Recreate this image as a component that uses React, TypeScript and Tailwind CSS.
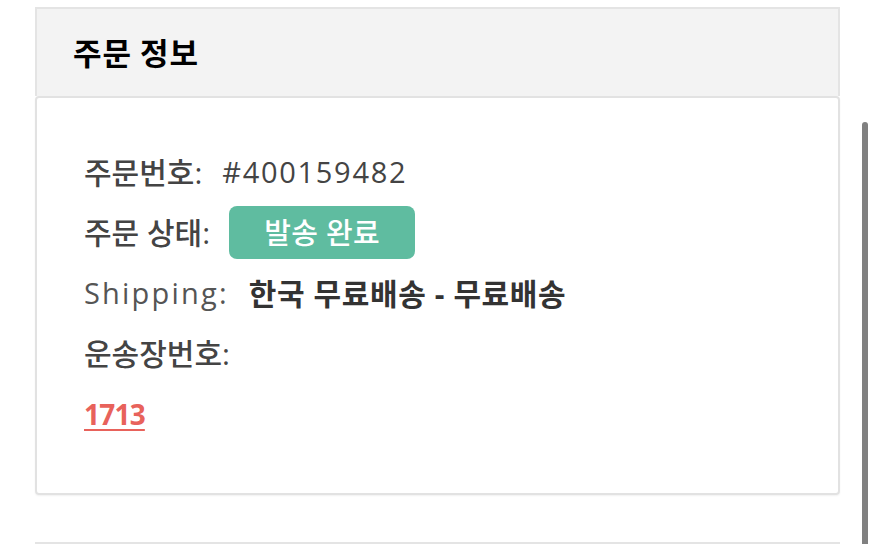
import React from "react";

const latin = { fontFamily: '"Open Sans", "Noto Sans CJK KR", sans-serif' };

export default function App() {
  return (
    <div className="relative w-[875px] h-[544px] overflow-hidden bg-white" style={latin}>
      <div className="pl-[35px] pt-[7px] w-[840px]">
        <div className="h-[89px] bg-[#f3f3f3] border-2 border-[#e4e4e4] border-b-0 flex items-center pl-[36px] pb-[3px]">
          <h2 className="text-[31px] font-bold text-black leading-none tracking-[1px]" style={{ fontFamily: '"Noto Sans CJK KR", sans-serif' }}>주문 정보</h2>
        </div>
        <div className="h-[399px] border-2 border-[#e2e2e2] rounded-[4px] shadow-[0_1px_2px_rgba(0,0,0,0.06)] pt-[44px] pl-[47px] flex flex-col">
          <div className="h-[60px] flex items-center text-[30px] text-[#444]">
            <span className="font-medium">주문번호:</span>
            <span className="ml-[20px] font-normal text-[29px] tracking-[1.7px] text-[#444]">#400159482</span>
          </div>
          <div className="h-[61px] flex items-center text-[30px] text-[#444]">
            <span className="font-medium">주문 상태:</span>
            <span className="ml-[19px] h-[53px] w-[186px] rounded-[8px] bg-[#5fbca0] text-white flex items-center justify-center font-medium text-[29px] tracking-[0.3px]">발송 완료</span>
          </div>
          <div className="h-[60px] flex items-center text-[30px]">
            <span className="font-normal text-[29px] text-[#555] tracking-[2.2px]">Shipping:</span>
            <span className="ml-[20px] font-bold text-[#333] tracking-[0.6px]">한국 무료배송 - 무료배송</span>
          </div>
          <div className="h-[61px] flex items-center text-[30px] text-[#444]">
            <span className="font-medium">운송장번호:</span>
          </div>
          <div className="h-[60px] flex items-center text-[28px]">
            <a className="font-bold text-[#e8625b] underline underline-offset-[4px] decoration-[2px] tracking-[-0.8px]">1713</a>
          </div>
        </div>
        <div className="mt-[47px] h-[10px] border-t-2 border-[#e4e4e4]"></div>
      </div>
      <div className="absolute left-[862px] top-[122px] w-[6px] h-[440px] rounded-full bg-[#808080]"></div>
    </div>
  );
}
